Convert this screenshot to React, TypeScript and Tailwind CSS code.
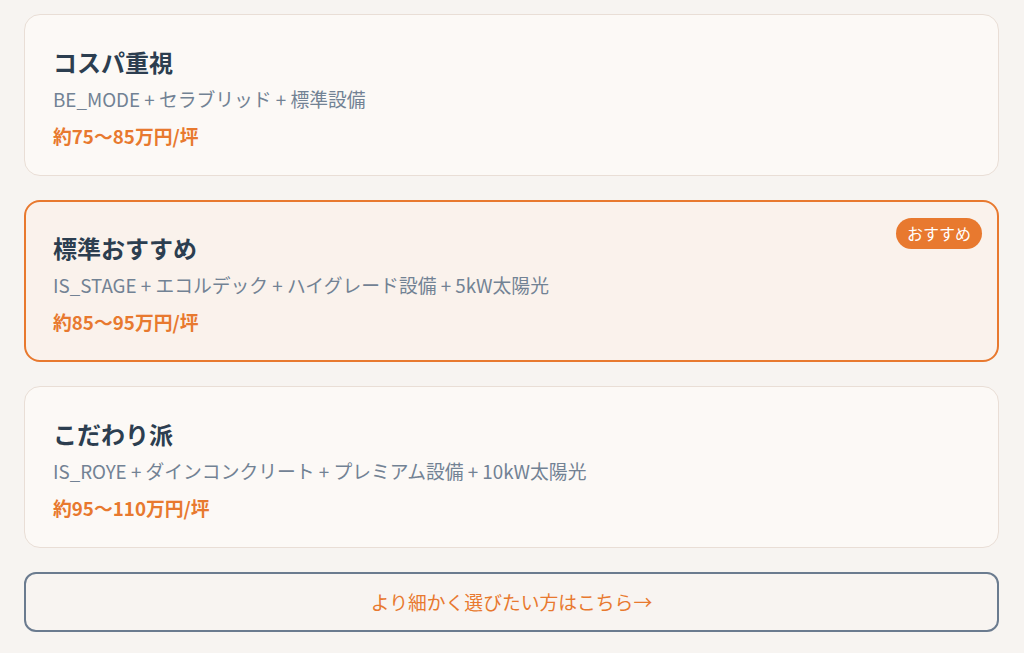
import React from "react";

type Plan = {
  name: string;
  spec: string;
  price: string;
  recommended?: boolean;
};

const plans: Plan[] = [
  { name: "コスパ重視", spec: "BE_MODE + セラブリッド + 標準設備", price: "約75〜85万円/坪" },
  {
    name: "標準おすすめ",
    spec: "IS_STAGE + エコルデック + ハイグレード設備 + 5kW太陽光",
    price: "約85〜95万円/坪",
    recommended: true,
  },
  { name: "こだわり派", spec: "IS_ROYE + ダインコンクリート + プレミアム設備 + 10kW太陽光", price: "約95〜110万円/坪" },
];

export default function App() {
  return (
    <div
      className="min-h-[653px] w-full bg-[#f7f4f1] pt-[14px] pl-6 pr-[25px] pb-6"
      style={{ fontFamily: '"Noto Sans CJK JP", "Noto Sans", sans-serif' }}
    >
      <div className="flex flex-col gap-6">
        {plans.map((plan) => (
          <div
            key={plan.name}
            className={`relative rounded-2xl ${
              plan.recommended
                ? "border-2 border-[#e8792f] bg-[#faf2ec] px-[27px] pt-[27px] pb-6"
                : "border border-[#e9ded6] bg-[#fcf9f6] px-7 pt-7 pb-[25px]"
            }`}
          >
            {plan.recommended && (
              <span className="absolute right-[15px] top-[16px] rounded-full bg-[#e8792f] px-[11px] py-[3px] text-base leading-[25px] text-white">
                おすすめ
              </span>
            )}
            <h3 className="text-2xl font-bold leading-[38px] text-[#2c3e50]">{plan.name}</h3>
            <p className="mt-1 text-[18.8px] leading-7 text-[#728294]">{plan.spec}</p>
            <p className="mt-[9px] text-[18.8px] font-bold leading-7 text-[#e8792f]">{plan.price}</p>
          </div>
        ))}
        <button className="h-[60px] w-full rounded-xl border-2 border-[#6b7b8f] bg-[#f8f4f1] text-[18.8px] text-[#e8792f]">
          より細かく選びたい方はこちら→
        </button>
      </div>
    </div>
  );
}
